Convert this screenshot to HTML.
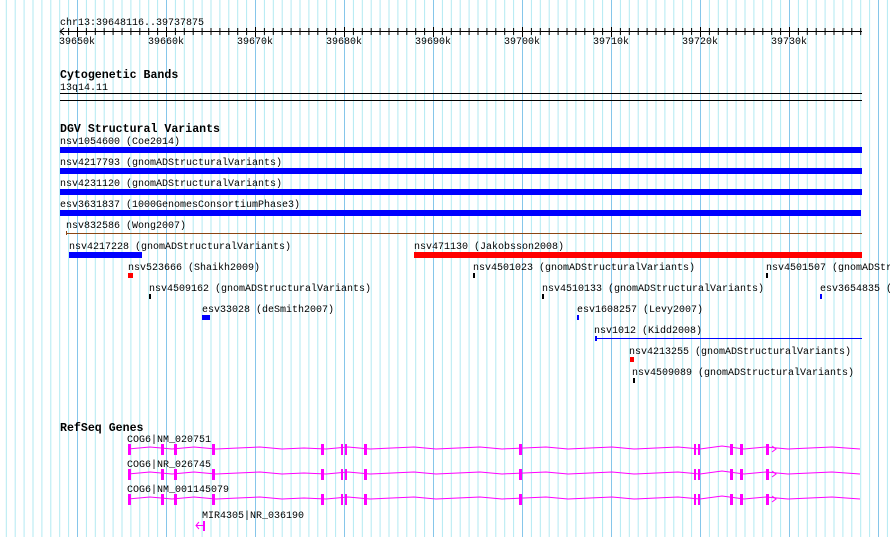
<!DOCTYPE html>
<html><head><meta charset="utf-8"><style>
html,body{margin:0;padding:0;background:#fff;width:890px;height:537px;overflow:hidden}
svg{display:block}
text{font-family:"Liberation Mono",monospace;font-size:10px;fill:#000}
.b{font-weight:bold;font-size:11.6px}
</style></head><body>
<svg width="890" height="537" xmlns="http://www.w3.org/2000/svg">
<defs>
<pattern id="minor" patternUnits="userSpaceOnUse" x="77" y="0" width="8.9" height="537">
<rect x="0" y="0" width="1" height="537" fill="#b2eaf2"/></pattern>
<pattern id="major" patternUnits="userSpaceOnUse" x="77" y="0" width="89" height="537">
<rect x="0" y="0" width="1" height="537" fill="#86c6ea"/></pattern>
<pattern id="tminor" patternUnits="userSpaceOnUse" x="77" y="0" width="8.9" height="40">
<rect x="0" y="28" width="1" height="7" fill="#000"/></pattern>
<pattern id="tmajor" patternUnits="userSpaceOnUse" x="77" y="0" width="89" height="40">
<rect x="0" y="27" width="1" height="10" fill="#000"/></pattern>
<g id="gene">
<polyline points="128,449 150,447 172,449 194,447 216,449 238,448 260,447 282,449 304,448 326,449 348,447 370,449 392,448 414,447 436,449 458,448 480,447 502,449 524,448 546,447 568,449 590,448 612,447 634,449 656,448 678,447 700,449 722,446 744,449 766,447 788,449 810,448 832,447 860,449" fill="none" stroke="#ff00ff"/>
<rect x="128" y="444" width="3" height="11" fill="#ff00ff"/>
<rect x="161" y="444" width="3" height="11" fill="#ff00ff"/>
<rect x="174" y="444" width="3" height="11" fill="#ff00ff"/>
<rect x="212" y="444" width="3" height="11" fill="#ff00ff"/>
<rect x="321" y="444" width="3" height="11" fill="#ff00ff"/>
<rect x="341" y="444" width="2" height="11" fill="#ff00ff"/>
<rect x="345" y="444" width="2" height="11" fill="#ff00ff"/>
<rect x="364" y="444" width="3" height="11" fill="#ff00ff"/>
<rect x="519" y="444" width="3" height="11" fill="#ff00ff"/>
<rect x="694" y="444" width="2" height="11" fill="#ff00ff"/>
<rect x="698" y="444" width="2" height="11" fill="#ff00ff"/>
<rect x="730" y="444" width="3" height="11" fill="#ff00ff"/>
<rect x="740" y="444" width="3" height="11" fill="#ff00ff"/>
<rect x="766" y="444" width="3" height="11" fill="#ff00ff"/>
<polyline points="772,446 776,449 772,452" fill="none" stroke="#ff00ff"/>
</g>
</defs>
<rect x="0" y="0" width="890" height="537" fill="url(#minor)"/>
<rect x="0" y="0" width="890" height="537" fill="url(#major)"/>
<!-- ruler -->
<text x="60" y="25">chr13:39648116..39737875</text>
<line x1="60" y1="31.5" x2="862" y2="31.5" stroke="#000"/>
<polyline points="64,28 60,31.5 64,35" fill="none" stroke="#000"/>
<rect x="60" y="0" width="802" height="40" fill="url(#tminor)"/>
<rect x="60" y="0" width="802" height="40" fill="url(#tmajor)"/>
<text x="59" y="44">39650k</text>
<text x="148" y="44">39660k</text>
<text x="237" y="44">39670k</text>
<text x="326" y="44">39680k</text>
<text x="415" y="44">39690k</text>
<text x="504" y="44">39700k</text>
<text x="593" y="44">39710k</text>
<text x="682" y="44">39720k</text>
<text x="771" y="44">39730k</text>
<!-- cyto -->
<text class="b" x="60" y="78">Cytogenetic Bands</text>
<text x="60" y="90">13q14.11</text>
<rect x="60" y="93" width="802" height="1" fill="#000"/>
<rect x="60" y="100" width="802" height="1" fill="#000"/>
<!-- DGV -->
<text class="b" x="60" y="132">DGV Structural Variants</text>
<text x="60" y="144">nsv1054600 (Coe2014)</text>
<rect x="60" y="147" width="802" height="6" fill="#0000ff"/>
<text x="60" y="165">nsv4217793 (gnomADStructuralVariants)</text>
<rect x="60" y="168" width="802" height="6" fill="#0000ff"/>
<text x="60" y="186">nsv4231120 (gnomADStructuralVariants)</text>
<rect x="60" y="189" width="802" height="6" fill="#0000ff"/>
<text x="60" y="207">esv3631837 (1000GenomesConsortiumPhase3)</text>
<rect x="60" y="210" width="801" height="6" fill="#0000ff"/>
<text x="66" y="228">nsv832586 (Wong2007)</text>
<rect x="66" y="233" width="796" height="1" fill="#8b4513"/>
<rect x="66" y="231" width="1" height="4" fill="#8b4513"/>
<text x="69" y="249">nsv4217228 (gnomADStructuralVariants)</text>
<rect x="69" y="252" width="73" height="6" fill="#0000ff"/>
<text x="414" y="249">nsv471130 (Jakobsson2008)</text>
<rect x="414" y="252" width="448" height="6" fill="#ff0000"/>
<text x="128" y="270">nsv523666 (Shaikh2009)</text>
<rect x="128" y="273" width="5" height="5" fill="#ff0000"/>
<text x="473" y="270">nsv4501023 (gnomADStructuralVariants)</text>
<rect x="473" y="273" width="2" height="5" fill="#000"/>
<text x="766" y="270">nsv4501507 (gnomADStr</text>
<rect x="766" y="273" width="2" height="5" fill="#000"/>
<text x="149" y="291">nsv4509162 (gnomADStructuralVariants)</text>
<rect x="149" y="294" width="2" height="5" fill="#000"/>
<text x="542" y="291">nsv4510133 (gnomADStructuralVariants)</text>
<rect x="542" y="294" width="2" height="5" fill="#000"/>
<text x="820" y="291">esv3654835 (</text>
<rect x="820" y="294" width="2" height="5" fill="#0000ff"/>
<text x="202" y="312">esv33028 (deSmith2007)</text>
<rect x="202" y="315" width="8" height="5" fill="#0000ff"/>
<text x="577" y="312">esv1608257 (Levy2007)</text>
<rect x="577" y="315" width="2" height="5" fill="#0000ff"/>
<text x="594" y="333">nsv1012 (Kidd2008)</text>
<rect x="595" y="338" width="267" height="1" fill="#0000ff"/>
<rect x="595" y="336" width="2" height="5" fill="#0000ff"/>
<text x="629" y="354">nsv4213255 (gnomADStructuralVariants)</text>
<rect x="630" y="357" width="4" height="5" fill="#ff0000"/>
<text x="632" y="375">nsv4509089 (gnomADStructuralVariants)</text>
<rect x="633" y="378" width="2" height="5" fill="#000"/>
<!-- RefSeq -->
<text class="b" x="60" y="431">RefSeq Genes</text>
<text x="127" y="442">COG6|NM_020751</text>
<use href="#gene"/>
<text x="127" y="467">COG6|NR_026745</text>
<use href="#gene" transform="translate(0,25)"/>
<text x="127" y="492">COG6|NM_001145079</text>
<use href="#gene" transform="translate(0,50)"/>
<text x="202" y="518">MIR4305|NR_036190</text>
<rect x="196" y="525" width="8" height="1" fill="#ff00ff"/>
<rect x="203" y="521" width="2" height="10" fill="#ff00ff"/>
<polyline points="199,522 196,525.5 199,529" fill="none" stroke="#ff00ff"/>
</svg>
</body></html>
